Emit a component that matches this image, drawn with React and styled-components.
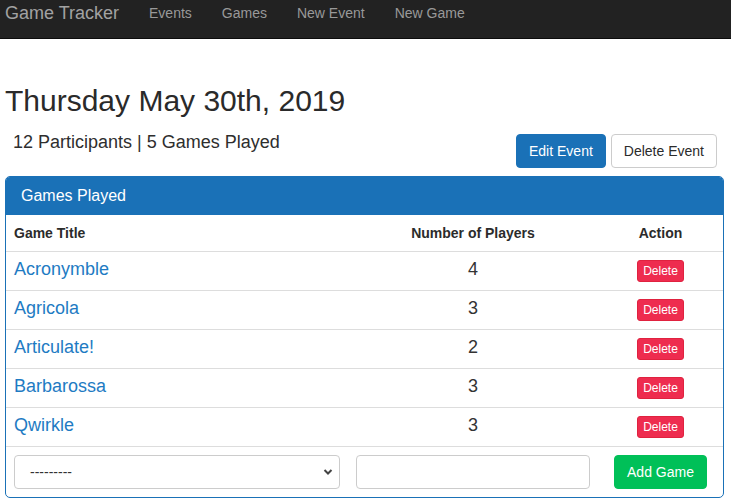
import React from "react";
import styled, { createGlobalStyle } from "styled-components";

const Global = createGlobalStyle`
  html, body { margin: 0; padding: 0; background: #fff; }
  body { font-family: "Liberation Sans", Arial, sans-serif; color: #2b2b2b; }
  * { box-sizing: border-box; }
`;

const Navbar = styled.nav`
  height: 39px;
  background: #222222;
  border-bottom: 1px solid #0c0c0c;
  display: flex;
  align-items: flex-start;
  padding: 2px 6px 0 5px;
`;

const Brand = styled.a`
  font-size: 18px;
  line-height: 22px;
  color: #a2a2a2;
  margin-right: 30px;
`;

const NavLink = styled.a`
  font-size: 14px;
  line-height: 22px;
  color: #999999;
  margin-right: ${(p) => p.$gap}px;
`;

const Main = styled.main`
  padding: 43px 7px 0 5px;
`;

const Title = styled.h1`
  margin: 0;
  font-size: 30px;
  font-weight: 400;
  line-height: 38px;
  color: #2a2a2a;
`;

const SummaryRow = styled.div`
  display: flex;
  justify-content: space-between;
  align-items: flex-start;
  margin-top: 11px;
`;

const Summary = styled.p`
  margin: 0 0 0 8px;
  font-size: 18px;
  line-height: 22px;
  color: #2e2e2e;
`;

const Actions = styled.div`
  display: flex;
  gap: 5px;
  margin-top: 3px;
  margin-right: 7px;
`;

const Button = styled.button`
  font-family: inherit;
  font-size: 14px;
  height: 34px;
  padding: 0 12px;
  border-radius: 4px;
  border: 1px solid ${(p) => (p.$primary ? "#1a71b7" : "#cccccc")};
  background: ${(p) => (p.$primary ? "#1a71b7" : "#ffffff")};
  color: ${(p) => (p.$primary ? "#ffffff" : "#2b2b2b")};
`;

const Card = styled.section`
  margin-top: 8px;
  border: 1px solid #1a71b7;
  border-radius: 5px;
  overflow: hidden;
`;

const CardHeader = styled.header`
  background: #1a71b7;
  color: #fff;
  font-size: 16px;
  height: 38px;
  display: flex;
  align-items: center;
  padding-left: 15px;
`;

const Row = styled.div`
  display: grid;
  grid-template-columns: 342px 250px 1fr;
  align-items: center;
  height: ${(p) => p.$h}px;
  border-bottom: ${(p) => (p.$last ? "none" : "1px solid #dddddd")};
`;

const Cell = styled.div`
  padding: 0 8px;
  text-align: ${(p) => p.$align || "left"};
`;

const TextCell = styled(Cell)`
  padding-bottom: 3px;
`;

const HeadCell = styled(Cell)`
  font-weight: 700;
  font-size: 14px;
  color: #2b2b2b;
`;

const GameLink = styled.a`
  color: #1e7bc3;
  font-size: 18px;
  text-decoration: none;
`;

const Count = styled.span`
  font-size: 18px;
  color: #333;
`;

const DeleteBtn = styled.button`
  font-family: inherit;
  font-size: 12px;
  height: 22px;
  padding: 0 5px;
  border-radius: 3px;
  border: 1px solid #e0223f;
  background: #ee2c4f;
  color: #fff;
`;

const SelectBox = styled.div`
  height: 34px;
  border: 1px solid #cccccc;
  border-radius: 4px;
  display: flex;
  align-items: center;
  justify-content: space-between;
  padding: 0 6px 0 15px;
  font-size: 14px;
  color: #333;
`;

const TextInput = styled.input`
  width: 100%;
  height: 34px;
  border: 1px solid #cccccc;
  border-radius: 4px;
`;

const AddBtn = styled.button`
  font-family: inherit;
  font-size: 14px;
  height: 34px;
  padding: 0 12px;
  border-radius: 4px;
  border: 1px solid #00c058;
  background: #00c058;
  color: #fff;
`;

const games = [
  ["Acronymble", 4],
  ["Agricola", 3],
  ["Articulate!", 2],
  ["Barbarossa", 3],
  ["Qwirkle", 3],
];

export default function App() {
  return (
    <>
      <Global />
      <Navbar>
        <Brand>Game Tracker</Brand>
        <NavLink $gap={30}>Events</NavLink>
        <NavLink $gap={30}>Games</NavLink>
        <NavLink $gap={30}>New Event</NavLink>
        <NavLink $gap={0}>New Game</NavLink>
      </Navbar>
      <Main>
        <Title>Thursday May 30th, 2019</Title>
        <SummaryRow>
          <Summary>12 Participants | 5 Games Played</Summary>
          <Actions>
            <Button $primary>Edit Event</Button>
            <Button>Delete Event</Button>
          </Actions>
        </SummaryRow>
        <Card>
          <CardHeader>Games Played</CardHeader>
          <Row $h={37}>
            <HeadCell>Game Title</HeadCell>
            <HeadCell $align="center">Number of Players</HeadCell>
            <HeadCell $align="center">Action</HeadCell>
          </Row>
          {games.map(([name, n]) => (
            <Row key={name} $h={39}>
              <TextCell>
                <GameLink href="#">{name}</GameLink>
              </TextCell>
              <TextCell $align="center">
                <Count>{n}</Count>
              </TextCell>
              <Cell $align="center">
                <DeleteBtn>Delete</DeleteBtn>
              </Cell>
            </Row>
          ))}
          <Row $h={50} $last>
            <Cell>
              <SelectBox>
                <span>---------</span>
                <svg width="10" height="8" viewBox="0 0 10 8">
                  <path d="M1.5 2 L5 5.5 L8.5 2" stroke="#444" strokeWidth="2" fill="none" />
                </svg>
              </SelectBox>
            </Cell>
            <Cell>
              <TextInput />
            </Cell>
            <Cell $align="center">
              <AddBtn>Add Game</AddBtn>
            </Cell>
          </Row>
        </Card>
      </Main>
    </>
  );
}
